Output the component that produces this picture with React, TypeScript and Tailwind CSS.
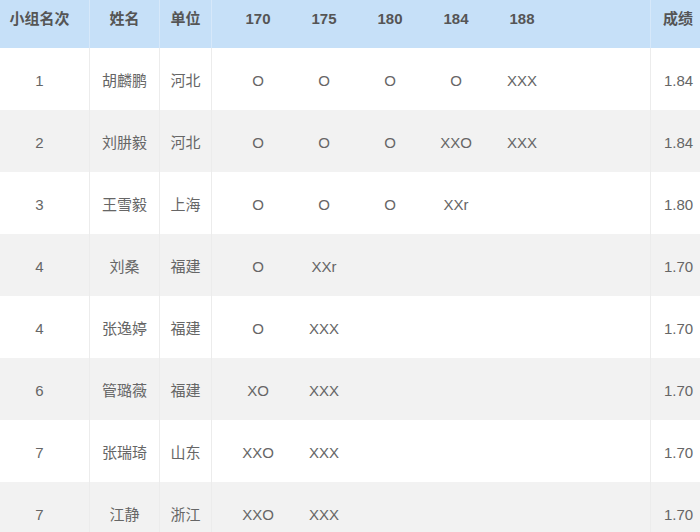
import React from "react";

const rows: string[][] = [
  ["1", "胡麟鹏", "河北", "O", "O", "O", "O", "XXX", "1.84"],
  ["2", "刘肼毅", "河北", "O", "O", "O", "XXO", "XXX", "1.84"],
  ["3", "王雪毅", "上海", "O", "O", "O", "XXr", "", "1.80"],
  ["4", "刘桑", "福建", "O", "XXr", "", "", "", "1.70"],
  ["4", "张逸婷", "福建", "O", "XXX", "", "", "", "1.70"],
  ["6", "管璐薇", "福建", "XO", "XXX", "", "", "", "1.70"],
  ["7", "张瑞琦", "山东", "XXO", "XXX", "", "", "", "1.70"],
  ["7", "江静", "浙江", "XXO", "XXX", "", "", "", "1.70"],
];

const grid = "grid grid-cols-[90px_70px_52px_79px_66px_66px_66px_66px_96px_49px]";

export default function App() {
  return (
    <div
      className="w-[700px] h-[532px] overflow-hidden bg-white text-[15px] text-[#666]"
      style={{ fontFamily: '"Liberation Sans", "Noto Sans CJK SC", sans-serif' }}
    >
      <div className={`${grid} h-[48px] bg-[#c6e0f8] font-bold text-[#555]`}>
        <div className="pr-[10px] pt-[8px] text-center border-r border-[#d6e8fa]">小组名次</div>
        <div className="pt-[8px] text-center border-r border-[#d6e8fa]">姓名</div>
        <div className="pt-[8px] text-center border-r border-[#d6e8fa]">单位</div>
        <div className="pl-[13px] pt-[8px] text-center">170</div>
        <div className="pt-[8px] text-center">175</div>
        <div className="pt-[8px] text-center">180</div>
        <div className="pt-[8px] text-center">184</div>
        <div className="pt-[8px] text-center">188</div>
        <div className="border-r border-[#d6e8fa]"></div>
        <div className="pl-[12px] pt-[8px] whitespace-nowrap">成绩</div>
      </div>
      {rows.map((r, i) => (
        <div
          key={i}
          className={`${grid} h-[62px] items-stretch ${i % 2 === 1 ? "bg-[#f2f2f2]" : "bg-white"}`}
        >
          <div className="flex items-center justify-center pt-[4px] pr-[10px] border-r border-[#ececec]">{r[0]}</div>
          <div className="flex items-center justify-center pt-[4px] border-r border-[#ececec]">{r[1]}</div>
          <div className="flex items-center justify-center pt-[4px] border-r border-[#ececec]">{r[2]}</div>
          <div className="flex items-center justify-center pt-[4px] pl-[13px]">{r[3]}</div>
          <div className="flex items-center justify-center pt-[4px]">{r[4]}</div>
          <div className="flex items-center justify-center pt-[4px]">{r[5]}</div>
          <div className="flex items-center justify-center pt-[4px]">{r[6]}</div>
          <div className="flex items-center justify-center pt-[4px]">{r[7]}</div>
          <div className="border-r border-[#ececec]"></div>
          <div className="flex items-center pt-[4px] pl-[13px] whitespace-nowrap">{r[8]}</div>
        </div>
      ))}
    </div>
  );
}
